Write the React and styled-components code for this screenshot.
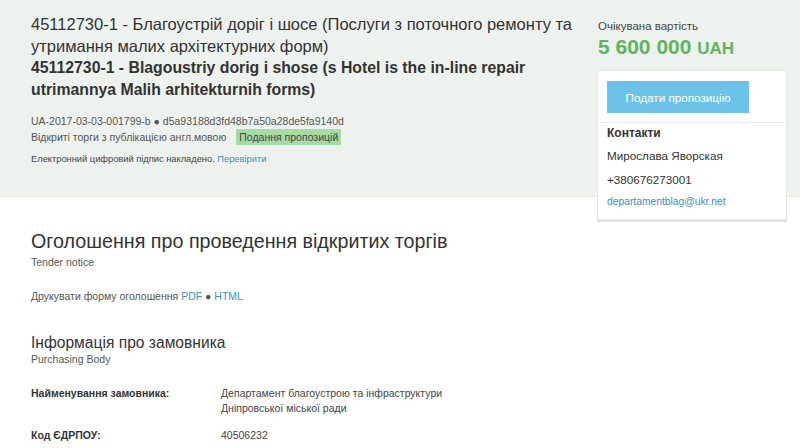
import React from "react";
import styled, { createGlobalStyle } from "styled-components";

const GlobalStyle = createGlobalStyle`
  html, body {
    margin: 0;
    padding: 0;
    background: #fff;
    font-family: "Liberation Sans", Arial, sans-serif;
    color: #333;
  }
  * { box-sizing: border-box; }
`;

const Header = styled.div`
  background: #eef2ef;
  height: 197px;
  border-bottom: 1px solid #e6ebe6;
  display: flex;
  padding: 14px 13px 0 31px;
`;

const MainCol = styled.div`
  flex: 1;
  padding-right: 14px;
`;

const Title = styled.h1`
  margin: 0;
  font-size: ${(p) => (p.bold ? "15.8px" : "16.5px")};
  line-height: 21.6px;
  font-weight: ${(p) => (p.bold ? 700 : 400)};
  color: #333;
`;

const Meta = styled.div`
  margin-top: 14px;
  font-size: 10.5px;
  line-height: 15px;
  color: #555;
`;

const MetaLine = styled.div`
  display: flex;
  align-items: center;
  gap: 10px;
`;

const Badge = styled.span`
  background: #a6dba6;
  color: #444;
  padding: 1px 3px;
  font-size: 10.5px;
  line-height: 14px;
`;

const Sign = styled.div`
  margin-top: 9px;
  font-size: 9.3px;
  color: #444;
`;

const A = styled.span`
  color: #3d8fb8;
`;

const SideCol = styled.div`
  width: 190px;
  padding-top: 6px;
`;

const PriceLabel = styled.div`
  font-size: 11.5px;
  color: #444;
  padding-left: 1px;
`;

const Price = styled.div`
  margin-top: 3px;
  font-size: 21px;
  font-weight: 700;
  color: #5fb55f;
  padding-left: 1px;

  & span {
    font-size: 17px;
  }
`;

const Card = styled.div`
  margin-top: 11px;
  background: #fff;
  border: 1px solid #e4e8e4;
  box-shadow: 0 2px 0 #e2e2e2;
  height: 150px;
`;

const CardTop = styled.div`
  padding: 10px 8px 9px 9px;
  border-bottom: 1px solid #ececec;
`;

const Button = styled.button`
  display: block;
  width: 142px;
  height: 32px;
  border: none;
  background: #6cc2e8;
  color: #fff;
  font-family: inherit;
  font-size: 11.7px;
`;

const Contacts = styled.div`
  padding: 2px 8px 0 9px;
`;

const ContactsTitle = styled.div`
  font-size: 12px;
  font-weight: 700;
  line-height: 17px;
`;

const ContactLine = styled.div`
  font-size: ${(p) => (p.small ? "10.3px" : "11.7px")};
  line-height: ${(p) => (p.small ? "20px" : "24px")};
  margin-top: ${(p) => (p.first ? "2px" : "0")};
  color: ${(p) => (p.link ? "#3d8fb8" : "#333")};
`;

const Body = styled.div`
  padding: 33px 31px 0;
`;

const SectionTitle = styled.h2`
  margin: 0;
  font-weight: 400;
  font-size: ${(p) => p.size}px;
  line-height: ${(p) => p.size + 4}px;
  color: #333;
`;

const Sub = styled.div`
  font-size: 10.5px;
  color: #555;
  margin-top: ${(p) => p.gap}px;
`;

const Print = styled.div`
  margin-top: 22px;
  margin-bottom: 31px;
  font-size: 10.5px;
  color: #555;
`;

const InfoTable = styled.div`
  margin-top: 21px;
  display: grid;
  grid-template-columns: 190px 1fr;
  row-gap: 13px;
  font-size: 10.5px;
  line-height: 14.5px;
`;

const Label = styled.div`
  font-weight: 700;
  color: #333;
`;

const Value = styled.div`
  color: #444;
`;

export default function App() {
  return (
    <>
      <GlobalStyle />
      <Header>
        <MainCol>
          <Title>
            45112730-1 - Благоустрій доріг і шосе (Послуги з поточного ремонту та
            утримання малих архітектурних форм)
          </Title>
          <Title bold>
            45112730-1 - Blagoustriy dorig i shose (s Hotel is the in-line repair
            utrimannya Malih arhitekturnih forms)
          </Title>
          <Meta>
            <div>UA-2017-03-03-001799-b ● d5a93188d3fd48b7a50a28de5fa9140d</div>
            <MetaLine>
              <span>Відкриті торги з публікацією англ.мовою</span>
              <Badge>Подання пропозицій</Badge>
            </MetaLine>
          </Meta>
          <Sign>
            Електронний цифровий підпис накладено. <A>Перевірити</A>
          </Sign>
        </MainCol>
        <SideCol>
          <PriceLabel>Очікувана вартість</PriceLabel>
          <Price>
            5 600 000 <span>UAH</span>
          </Price>
          <Card>
            <CardTop>
              <Button>Подати пропозицію</Button>
            </CardTop>
            <Contacts>
              <ContactsTitle>Контакти</ContactsTitle>
              <ContactLine first>Мирослава Яворская</ContactLine>
              <ContactLine>+380676273001</ContactLine>
              <ContactLine small link>
                departamentblag@ukr.net
              </ContactLine>
            </Contacts>
          </Card>
        </SideCol>
      </Header>
      <Body>
        <SectionTitle size={19.7}>Оголошення про проведення відкритих торгів</SectionTitle>
        <Sub gap={2}>Tender notice</Sub>
        <Print>
          Друкувати форму оголошення <A>PDF</A> ● <A>HTML</A>
        </Print>
        <SectionTitle size={15.6}>Інформація про замовника</SectionTitle>
        <Sub gap={1}>Purchasing Body</Sub>
        <InfoTable>
          <Label>Найменування замовника:</Label>
          <Value>
            Департамент благоустрою та інфраструктури
            <br />
            Дніпровської міської ради
          </Value>
          <Label>Код ЄДРПОУ:</Label>
          <Value>40506232</Value>
        </InfoTable>
      </Body>
    </>
  );
}
